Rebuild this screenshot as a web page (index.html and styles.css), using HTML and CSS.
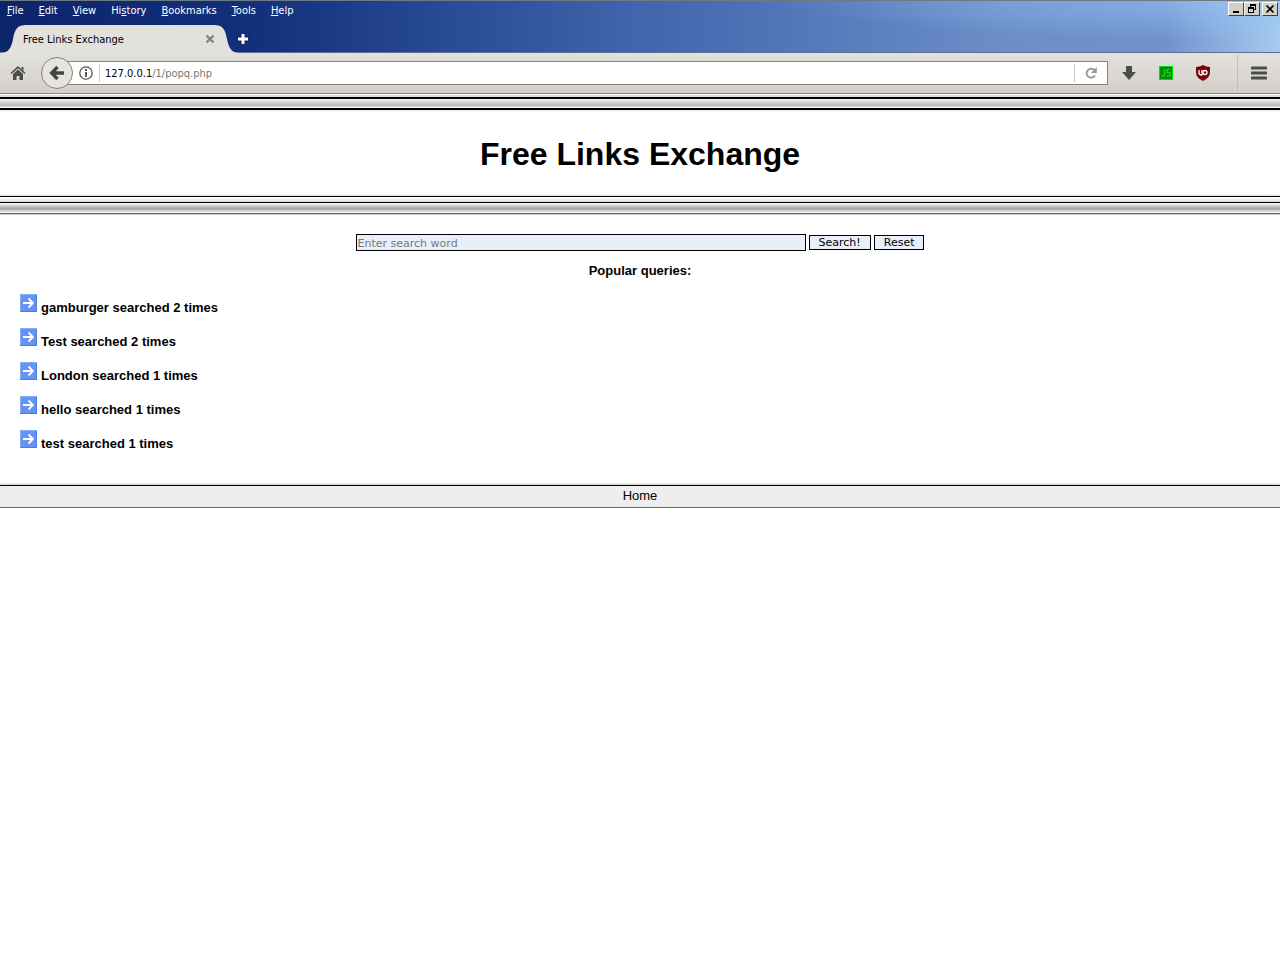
FILE: index.html
```
<!DOCTYPE html>
<html lang="en">
<head>
    <meta charset="UTF-8">
    <meta name="viewport" content="width=device-width, initial-scale=1.0">
    <title>Free Links Exchange</title>
    <link rel="stylesheet" href="styles.css">
</head>
<body>
    <!-- browser window -->
    <div class="browser">
        <div class="titlebar">
            <div class="menu-row">
                <nav class="menu">
                    <button type="button"><u>F</u>ile</button>
                    <button type="button"><u>E</u>dit</button>
                    <button type="button"><u>V</u>iew</button>
                    <button type="button">Hi<u>s</u>tory</button>
                    <button type="button"><u>B</u>ookmarks</button>
                    <button type="button"><u>T</u>ools</button>
                    <button type="button"><u>H</u>elp</button>
                </nav>
                <div class="window-buttons">
                    <button type="button" aria-label="Minimize">
                        <svg width="12" height="10" viewBox="0 0 12 10"><path d="M3 7h6v2H3z"/></svg>
                    </button>
                    <button type="button" aria-label="Restore">
                        <svg width="12" height="10" viewBox="0 0 12 10"><path d="M4 0h6v6H8V5h1V2H5v1H4zM2 3h6v6H2zM3 5v3h4V5z" fill-rule="evenodd"/></svg>
                    </button>
                    <button type="button" class="close" aria-label="Close">
                        <svg width="12" height="10" viewBox="0 0 12 10"><path d="M2.500 1.500l7 7M9.500 1.500l-7 7" stroke="#000" stroke-width="1.700"/></svg>
                    </button>
                </div>
            </div>
            <div class="tabs">
                <div class="tab">
                    <svg class="tab-shape" viewBox="0 0 240 28" preserveAspectRatio="none"><path d="M0 28C8 28 11 24 13 14C15 3 18 0 26 0H214C222 0 225 3 227 14C229 24 232 28 240 28z" fill="#e3e1dc"/></svg>
                    <span class="tab-title">Free Links Exchange</span>
                    <button type="button" class="tab-close" aria-label="Close tab">
                        <svg width="10" height="10" viewBox="0 0 10 10"><path d="M1.500 1.500l7 7M8.500 1.500l-7 7" stroke="#85837f" stroke-width="2.400"/></svg>
                    </button>
                </div>
                <button type="button" class="tab-new" aria-label="New tab">
                    <svg width="14" height="14" viewBox="0 0 14 14"><path d="M7 1v12M1 7h12" stroke="#13275b" stroke-width="5"/><path d="M7 2v10M2 7h10" stroke="#fff" stroke-width="3"/></svg>
                </button>
            </div>
        </div>

        <div class="toolbar">
            <button type="button" class="home" aria-label="Home page">
                <svg width="16" height="16" viewBox="0 0 16 16"><path d="M8 1l7.500 7-1 1L8 3.200 1.500 9l-1-1z" fill="#4c4c4c"/><path d="M11.500 2h2v4l-2-2z" fill="#4c4c4c"/><path d="M3 9l5-4.500L13 9v6H9.500v-4h-3v4H3z" fill="#4c4c4c"/></svg>
            </button>
            <button type="button" class="back" aria-label="Back">
                <svg width="16" height="16" viewBox="0 0 16 16"><path d="M8.500 2L2.700 8l5.800 6M3 8h12" fill="none" stroke="#454545" stroke-width="3.400"/></svg>
            </button>
            <div class="address">
                <svg class="info" width="14" height="14" viewBox="0 0 14 14"><circle cx="7" cy="7" r="6.200" fill="none" stroke="#555" stroke-width="1.300"/><path d="M6 3h2v2H6zM6 6h2v5H6z" fill="#555"/></svg>
                <span class="url"><b>127.0.0.1</b>/1/popq.php</span>
                <button type="button" class="reload" aria-label="Reload">
                    <svg width="14" height="14" viewBox="0 0 14 14"><path d="M10.500 4.200A4.500 4.500 0 1 0 11 9.500" fill="none" stroke="#979ba0" stroke-width="1.900"/><path d="M12.800 1v6H6.800z" fill="#979ba0"/></svg>
                </button>
            </div>
            <div class="extras">
                <button type="button" aria-label="Downloads">
                    <svg width="16" height="16" viewBox="0 0 16 16"><path d="M5 1h6v6h4l-7 8-7-8h4z" fill="#4c4c4c"/></svg>
                </button>
                <button type="button" aria-label="JavaScript switch">
                    <svg width="16" height="16" viewBox="0 0 16 16"><path d="M1 1h14v14H1z" fill="#0d0"/><path d="M2 2h12v12H2z" fill="#008c08"/><path d="M6.500 4v6q0 1.500-3 1M12 4.500H9v3h3V11H8.500" fill="none" stroke="#19dc20" stroke-width="1.200"/></svg>
                </button>
                <button type="button" aria-label="uBlock">
                    <svg width="16" height="16" viewBox="0 0 16 16"><path d="M8 0q3 2 7 2v5q0 6-7 9-7-3-7-9V2q4 0 7-2z" fill="#7c0008"/><path d="M4 5v3q0 2 3 2V5" fill="none" stroke="#fff" stroke-width="1.300"/><circle cx="10" cy="7.500" r="2" fill="none" stroke="#fff" stroke-width="1.300"/></svg>
                </button>
            </div>
            <button type="button" class="open-menu" aria-label="Open menu">
                <svg width="16" height="14" viewBox="0 0 16 14"><path d="M1 2h14M1 7h14M1 12h14" stroke="#4c4c4c" stroke-width="3" stroke-linecap="round"/></svg>
            </button>
        </div>
    </div>

    <!-- page -->
    <div class="bar bar-top"></div>
    <header>
        <h1>Free Links Exchange</h1>
    </header>
    <div class="bar bar-thin"></div>
    <div class="bar bar-bottom"></div>

    <main>
        <form class="search">
            <input type="text" name="q" placeholder="Enter search word" aria-label="Search word">
            <button type="submit">Search!</button>
            <button type="reset">Reset</button>
        </form>
        <h2>Popular queries:</h2>
        <svg width="0" height="0" class="defs">
            <symbol id="arrow" viewBox="0 0 17 18">
                <path d="M0 0h17v18H0z" fill="#6493f5"/>
                <path d="M0 0h17v1H1v17H0z" fill="#82b0f5"/>
                <path d="M16 1h1v17H0v-1h16z" fill="#4d7ad6"/>
                <path d="M3 9h10M8.500 4.500L13 9l-4.500 4.500" fill="none" stroke="#fff" stroke-width="1.800"/>
            </symbol>
        </svg>
        <ul class="queries">
            <li><svg width="17" height="18"><use href="#arrow"/></svg><span>gamburger searched 2 times</span></li>
            <li><svg width="17" height="18"><use href="#arrow"/></svg><span>Test searched 2 times</span></li>
            <li><svg width="17" height="18"><use href="#arrow"/></svg><span>London searched 1 times</span></li>
            <li><svg width="17" height="18"><use href="#arrow"/></svg><span>hello searched 1 times</span></li>
            <li><svg width="17" height="18"><use href="#arrow"/></svg><span>test searched 1 times</span></li>
        </ul>
    </main>

    <footer>
        <a href="#">Home</a>
    </footer>
</body>
</html>
```
FILE: styles.css
```
* {
    box-sizing: border-box;
}

body {
    margin: 0;
    background: #fff;
    color: #000;
    font-family: "Liberation Sans", Arial, sans-serif;
    font-size: 13px;
}

button {
    margin: 0;
    padding: 0;
    border: 0;
    background: none;
    color: inherit;
    font: inherit;
}

svg {
    display: block;
}

/* browser window */
.browser {
    font-family: "DejaVu Sans Condensed", Tahoma, sans-serif;
    font-size: 11px;
}

.titlebar {
    height: 53px;
    border-top: 1px solid #6d7a80;
    border-bottom: 1px solid #5f7095;
    background:
        radial-gradient(ellipse 500px 40px at 100% 0, rgba(155, 200, 248, 0.6), rgba(155, 200, 248, 0)),
        linear-gradient(to right, #0c246a 0%, #12307c 20%, #4165ae 50%, #6b8ec8 78%, #7092cd 91%, #a6caf0 100%);
}

.menu-row {
    display: flex;
    justify-content: space-between;
    height: 24px;
}

.menu {
    display: flex;
    align-items: flex-start;
    gap: 15px;
    padding: 3px 7px;
    color: #fff;
    line-height: 14px;
}

.window-buttons {
    display: flex;
    padding: 1px 2px 0 0;
}

.window-buttons button {
    display: flex;
    align-items: center;
    justify-content: center;
    width: 16px;
    height: 14px;
    border: 1px solid;
    border-color: #fff #404040 #404040 #fff;
    background: #d4d0c8;
}

.window-buttons .close {
    margin-left: 2px;
}

.tabs {
    display: flex;
    height: 28px;
}

.tab {
    position: relative;
    display: flex;
    align-items: center;
    justify-content: space-between;
    width: 240px;
    padding: 0 25px 0 23px;
}

.tab-shape {
    position: absolute;
    top: 0;
    left: 0;
    width: 100%;
    height: 100%;
}

.tab-title,
.tab-close {
    position: relative;
}

.tab-new {
    margin-left: -4px;
}

.toolbar {
    display: flex;
    align-items: center;
    height: 41px;
    padding-left: 10px;
    border-bottom: 1px solid #8b8883;
    background: linear-gradient(#e3e1dc, #d4d0c8);
}

.back {
    z-index: 1;
    display: flex;
    align-items: center;
    justify-content: center;
    width: 32px;
    height: 32px;
    margin-left: 15px;
    border: 1px solid #85837e;
    border-radius: 50%;
    background: #e6e4df;
}

.address {
    display: flex;
    flex: 1;
    align-items: center;
    height: 24px;
    margin-left: -6px;
    padding-left: 11px;
    border: 1px solid #85837e;
    background: #fff;
}

.url {
    flex: 1;
    margin-left: 6px;
    padding: 2px 0 0 5px;
    border-left: 1px solid #ccc;
    color: #777;
    line-height: 16px;
}

.url b {
    color: #000;
    font-weight: normal;
}

.reload {
    padding: 2px 9px;
    border-left: 1px solid #ccc;
}

.extras {
    display: flex;
    gap: 21px;
    padding: 0 26px 0 13px;
}

.open-menu {
    display: flex;
    align-items: center;
    height: 36px;
    padding: 0 13px;
    border-left: 1px solid #c2beb7;
}

/* ruled bars round the heading */
.bar-top {
    height: 18px;
    background: linear-gradient(#fff 0 1px, #ddd 1px 3px, #000 3px 5px, #f4f4f4 5px, #ccc 9px, #bbb 12px, #fff 13px, #ddd 14px, #000 14px 16px, #e8e8e8 16px, #fff 18px);
}

header {
    padding: 22px 0 20px;
}

h1 {
    margin: 0;
    font-size: 32px;
    line-height: 40px;
    text-align: center;
}

.bar-thin {
    height: 8px;
    background: linear-gradient(#fff, #ddd 2px, #000 2px 3px, #fff 3px, #ddd 8px);
}

.bar-bottom {
    height: 13px;
    border-top: 1px solid #000;
    background: linear-gradient(#fff, #aaa 5px, #aaa 6px, #fff 10px, #666 10px 11px, #ccc 11px 12px);
}

/* content */
.search {
    display: flex;
    align-items: center;
    justify-content: center;
    gap: 3px;
    padding-top: 19px;
    font-family: "DejaVu Sans", Verdana, sans-serif;
    font-size: 11px;
}

.search input,
.search button {
    border: 1px solid #000;
    background: #e9eff9;
    font: inherit;
}

.search input {
    width: 450px;
    height: 17px;
    padding: 1px 1px 0;
}

.search input::placeholder {
    color: #757980;
}

.search button {
    height: 15px;
    padding: 0 9px;
    line-height: 13px;
}

h2 {
    margin: 12px 0 0;
    font-size: 13px;
    line-height: 16px;
    text-align: center;
}

.defs {
    position: absolute;
}

.queries {
    margin: 15px 0 0;
    padding: 0 20px;
    list-style: none;
    font-weight: bold;
    line-height: 18px;
}

.queries li {
    display: flex;
    gap: 4px;
    align-items: flex-start;
    height: 34px;
}

.queries span {
    padding-top: 5px;
}

footer {
    margin-top: 21px;
    padding-bottom: 1px;
    border-top: 1px solid #000;
    border-bottom: 1px solid #666;
    background: #eee;
    box-shadow: 0 0 3px #999;
    line-height: 20px;
    text-align: center;
}

footer a {
    color: #000;
    text-decoration: none;
}
```
